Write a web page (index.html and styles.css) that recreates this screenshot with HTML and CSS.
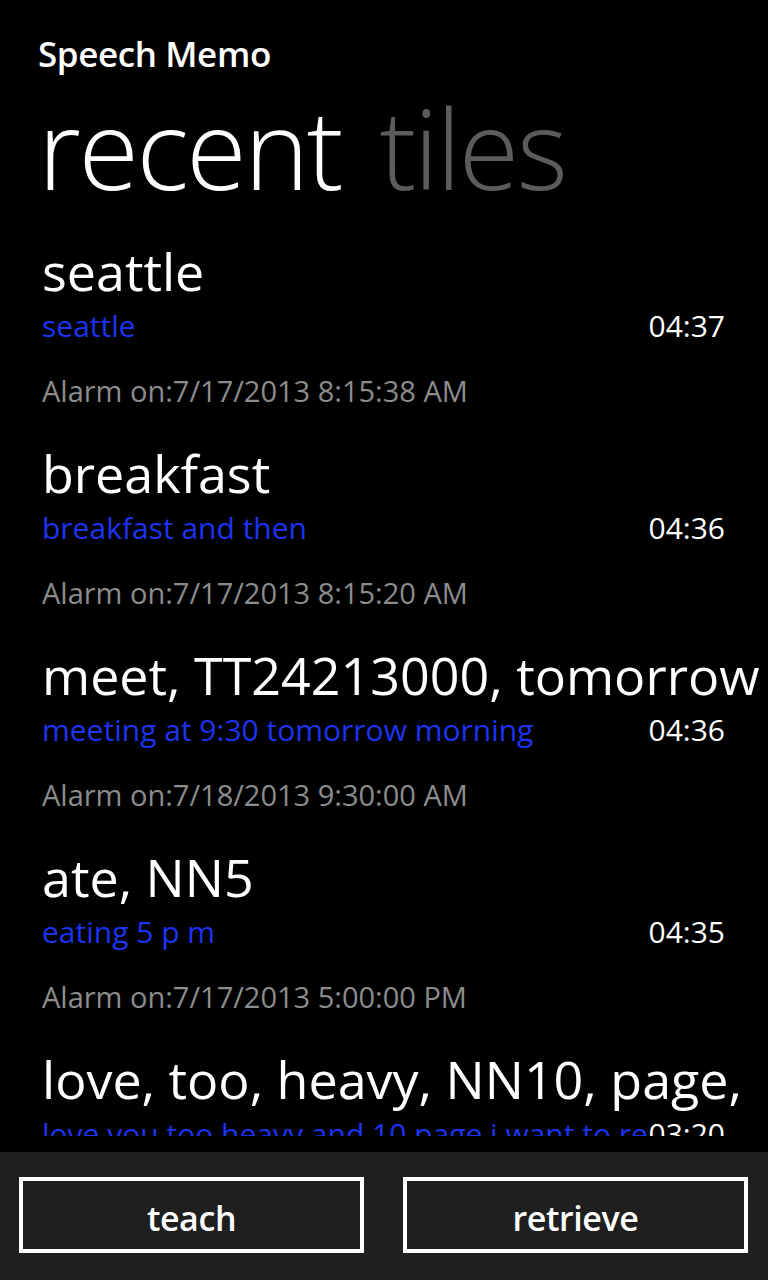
FILE: index.html
```html
<!DOCTYPE html>
<html>
<head>
<meta charset="utf-8">
<link rel="stylesheet" href="styles.css">
</head>
<body>
<div class="screen">
  <header class="header">
    <div class="app-title">Speech Memo</div>
    <div class="pivot"><span class="pivot-active">recent</span> <span class="pivot-inactive">tiles</span></div>
  </header>
  <main class="list-wrap">
    <ul class="list">
      <li class="item">
        <div class="item-title">seattle</div>
        <div class="item-row"><span class="item-sub">seattle</span><span class="item-time">04:37</span></div>
        <div class="item-alarm">Alarm on:7/17/2013 8:15:38 AM</div>
      </li>
      <li class="item">
        <div class="item-title">breakfast</div>
        <div class="item-row"><span class="item-sub">breakfast and then</span><span class="item-time">04:36</span></div>
        <div class="item-alarm">Alarm on:7/17/2013 8:15:20 AM</div>
      </li>
      <li class="item">
        <div class="item-title">meet, TT24213000, tomorrow</div>
        <div class="item-row"><span class="item-sub">meeting at 9:30 tomorrow morning</span><span class="item-time">04:36</span></div>
        <div class="item-alarm">Alarm on:7/18/2013 9:30:00 AM</div>
      </li>
      <li class="item">
        <div class="item-title">ate, NN5</div>
        <div class="item-row"><span class="item-sub">eating 5 p m</span><span class="item-time">04:35</span></div>
        <div class="item-alarm">Alarm on:7/17/2013 5:00:00 PM</div>
      </li>
      <li class="item">
        <div class="item-title">love, too, heavy, NN10, page,</div>
        <div class="item-row"><span class="item-sub">love you too heavy and 10 page i want to read</span><span class="item-time">03:20</span></div>
        <div class="item-alarm">Alarm on:7/17/2013 3:00:00 PM</div>
      </li>
    </ul>
  </main>
  <footer class="app-bar">
    <button class="bar-button">teach</button>
    <button class="bar-button">retrieve</button>
  </footer>
</div>
</body>
</html>
```

FILE: styles.css
```css
html, body {
  margin: 0;
  padding: 0;
  background: #000;
}

body {
  font-family: "Open Sans", "Noto Sans", sans-serif;
  color: #fff;
}

.screen {
  width: 768px;
  height: 1280px;
  display: flex;
  flex-direction: column;
  overflow: hidden;
  background: #000;
}

.header {
  padding: 32px 0 0 38px;
  flex: none;
}

.app-title {
  font-size: 35px;
  font-weight: 600;
  line-height: 44px;
  letter-spacing: -0.4px;
  white-space: nowrap;
}

.pivot {
  margin-top: 6px;
  font-size: 110px;
  font-weight: 300;
  line-height: 130px;
  letter-spacing: -2.4px;
  word-spacing: 12px;
  white-space: nowrap;
}

.pivot-active {
  color: #fff;
}

.pivot-inactive {
  color: #5c5c5c;
}

.list-wrap {
  flex: 1;
  min-height: 0;
  margin: 24px 0 16px 0;
  overflow: hidden;
}

.list {
  list-style: none;
  margin: 0;
  padding: 0;
}

.item {
  height: 202px;
  padding: 0 43px 0 42px;
  box-sizing: border-box;
}

.item-title {
  font-size: 52px;
  line-height: 70px;
  letter-spacing: 0;
  white-space: nowrap;
  margin-right: -43px;
  overflow: hidden;
}

.item-row {
  display: flex;
  align-items: baseline;
  font-size: 30px;
  line-height: 40px;
}

.item-sub {
  flex: 1;
  min-width: 0;
  color: #1c34f2;
  white-space: nowrap;
  overflow: hidden;
}

.item-time {
  flex: none;
  color: #fff;
  text-align: right;
}

.item-alarm {
  margin-top: 26px;
  font-size: 29px;
  line-height: 38px;
  color: #8c8c8c;
  white-space: nowrap;
}

.app-bar {
  flex: none;
  height: 128px;
  box-sizing: border-box;
  background: #1f1f1f;
  padding: 25px 20px 0 19px;
  display: flex;
  gap: 39px;
  align-items: flex-start;
}

.bar-button {
  flex: 1;
  height: 76px;
  border: 4px solid #fff;
  background: #1f1f1f;
  color: #fff;
  font-family: "Open Sans", "Noto Sans", sans-serif;
  font-size: 34px;
  font-weight: 600;
  letter-spacing: -0.4px;
  padding: 5px 0 0 0;
}
```
